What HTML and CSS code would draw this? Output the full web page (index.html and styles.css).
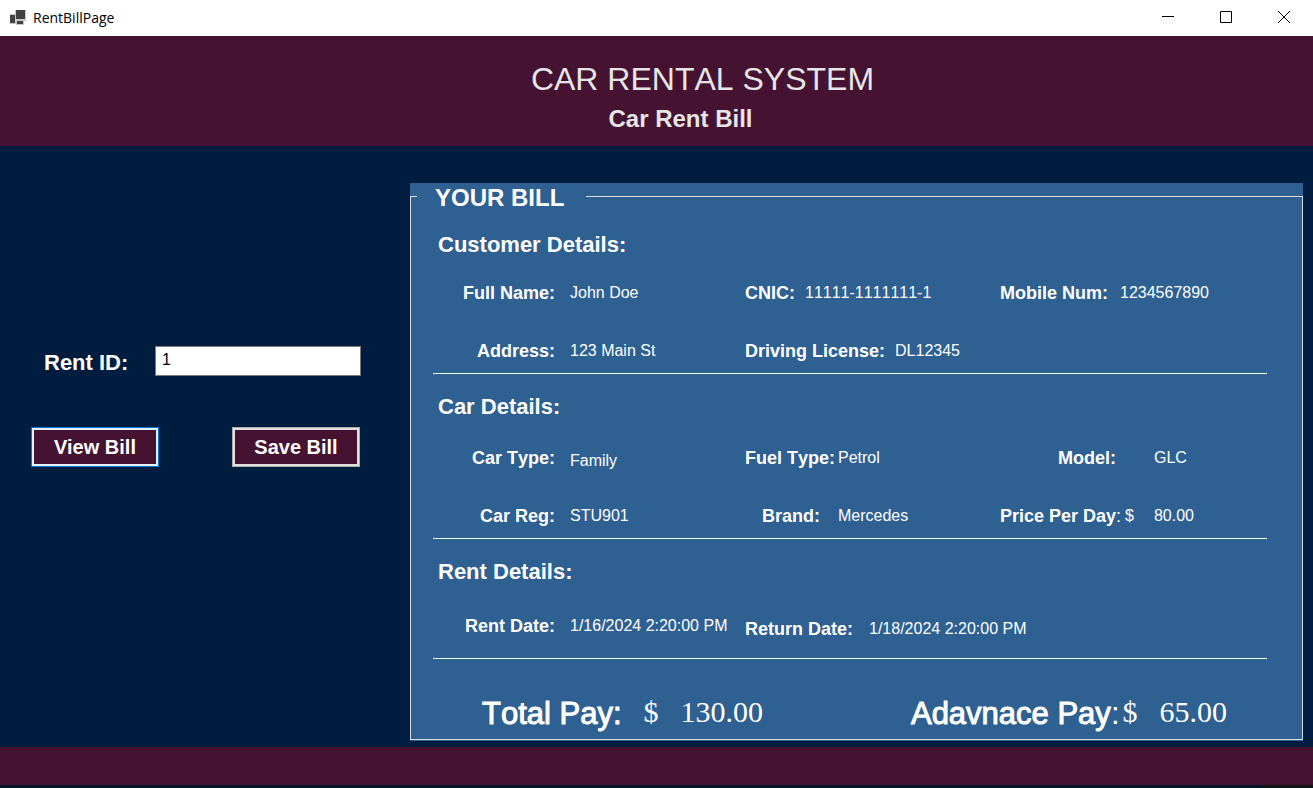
FILE: index.html
```html
<!DOCTYPE html>
<html lang="en">
<head>
<meta charset="utf-8">
<title>RentBillPage</title>
<link rel="stylesheet" href="styles.css">
</head>
<body>
<div class="titlebar">
  <svg class="app-icon" width="16" height="16" viewBox="0 0 16 16" aria-hidden="true">
    <path fill="#c8c8c8" d="M5 0h11v11H5zM0 4h6v10H0zM6 10h8v5H6z"/>
    <path fill="#424242" d="M6 0h9v9H6zM0 5h5v8H0zM7 11h6v3H7z"/>
  </svg>
  <span class="window-title">RentBillPage</span>
  <div class="window-controls">
    <button type="button" aria-label="Minimize"><svg width="12" height="12" viewBox="0 0 12 12"><path d="M0 5.5h12"/></svg></button>
    <button type="button" aria-label="Maximize"><svg width="12" height="12" viewBox="0 0 12 12"><path d="M.5.5h11v11H.5z"/></svg></button>
    <button type="button" aria-label="Close"><svg width="12" height="12" viewBox="0 0 12 12"><path d="M0 0l12 12M12 0L0 12"/></svg></button>
  </div>
</div>

<header class="banner">
  <h1>CAR RENTAL SYSTEM</h1>
  <p>Car Rent Bill</p>
</header>

<main class="content">
  <form class="lookup">
    <div class="lookup-field">
      <label for="rent-id">Rent ID:</label>
      <input id="rent-id" type="text" value="1">
    </div>
    <div class="actions">
      <button class="action focused" type="button">View Bill</button>
      <button class="action" type="button">Save Bill</button>
    </div>
  </form>

  <div class="panel">
    <fieldset class="bill">
      <legend>YOUR BILL</legend>
      <div class="bill-body">
        <section class="group customer">
          <h2>Customer Details:</h2>
          <dl class="row">
            <div class="field first"><dt>Full Name:</dt><dd>John Doe</dd></div>
            <div class="field"><dt>CNIC:</dt><dd>11111-1111111-1</dd></div>
            <div class="field mobile"><dt>Mobile Num:</dt><dd>1234567890</dd></div>
          </dl>
          <dl class="row">
            <div class="field first"><dt>Address:</dt><dd>123 Main St</dd></div>
            <div class="field"><dt>Driving License:</dt><dd>DL12345</dd></div>
          </dl>
        </section>
        <section class="group car">
          <h2>Car Details:</h2>
          <dl class="row">
            <div class="field first lowered-value"><dt>Car Type:</dt><dd>Family</dd></div>
            <div class="field second"><dt>Fuel Type:</dt><dd>Petrol</dd></div>
            <div class="field third"><dt>Model:</dt><dd>GLC</dd></div>
          </dl>
          <dl class="row">
            <div class="field first"><dt>Car Reg:</dt><dd>STU901</dd></div>
            <div class="field second brand"><dt>Brand:</dt><dd>Mercedes</dd></div>
            <div class="field price"><dt>Price Per Day<span class="light">:</span></dt><dd><span>$</span><span>80.00</span></dd></div>
          </dl>
        </section>
        <section class="group rent">
          <h2>Rent Details:</h2>
          <dl class="row">
            <div class="field first"><dt>Rent Date:</dt><dd>1/16/2024 2:20:00 PM</dd></div>
            <div class="field return"><dt>Return Date:</dt><dd>1/18/2024 2:20:00 PM</dd></div>
          </dl>
        </section>
        <dl class="totals">
          <div class="total"><dt>Total Pay:</dt><dd><span>$</span><span>130.00</span></dd></div>
          <div class="total advance"><dt>Adavnace Pay<span class="light">:</span></dt><dd><span>$</span><span>65.00</span></dd></div>
        </dl>
      </div>
    </fieldset>
  </div>
</main>

<footer class="footer"></footer>
<div class="edge"></div>
</body>
</html>
```
FILE: styles.css
```css
* { box-sizing: border-box; }

body {
  margin: 0;
  min-height: 100vh;
  display: flex;
  flex-direction: column;
  background: #001d40;
  color: #fff;
  font-family: "Liberation Sans", Arial, sans-serif;
  font-size: 16px;
  font-kerning: none;
  line-height: 20px;
}

h1, h2, p, dl, dd { margin: 0; }

.titlebar {
  display: flex;
  align-items: center;
  height: 36px;
  padding-left: 10px;
  background: #fff;
  color: #000;
}
.window-title {
  margin-left: 7px;
  font-family: "Open Sans", "Noto Sans", sans-serif;
  font-size: 14px;
}
.window-controls { display: flex; margin-left: auto; }
.window-controls button {
  display: grid;
  place-items: center;
  width: 58px;
  height: 36px;
  padding: 0 0 2px;
  border: 0;
  background: none;
}
.window-controls path { fill: none; stroke: #000; stroke-width: 1; }

.banner {
  padding: 23px 0 12px 92px;
  background: #451232;
  color: #e6e6e6;
  text-align: center;
}
.banner h1 {
  font-size: 32px;
  font-weight: 400;
  line-height: 40px;
}
.banner p {
  margin-top: 5px;
  margin-right: 44px;
  font-size: 24px;
  font-weight: 700;
  line-height: 30px;
}

.content {
  flex: 1;
  display: flex;
  align-items: flex-start;
  padding: 37px 10px 6px 0;
}

.lookup { flex: 0 0 410px; padding: 163px 49px 0 31px; }
.lookup-field { display: flex; align-items: flex-end; padding-left: 13px; }
.lookup-field label {
  width: 111px;
  font-size: 22px;
  font-weight: 700;
  line-height: 26px;
}
.lookup-field input {
  width: 206px;
  height: 30px;
  padding: 0 6px 2px;
  border: 1px solid #7a7a7a;
  background: #fff;
  color: #000;
  font: inherit;
}
.actions { display: flex; gap: 73px; margin-top: 51px; }
.action {
  width: 128px;
  height: 40px;
  padding: 0;
  border: 1px solid #adadad;
  box-shadow: inset 0 0 0 2px #e1e1e1;
  background: #451232;
  color: #fff;
  font-family: inherit;
  font-size: 20px;
  font-weight: 700;
}
.action.focused { border-color: #0078d7; box-shadow: inset 0 0 0 2px #e5f1fb; }

.panel { flex: 1; padding-bottom: 1px; background: #2e6091; }
.bill {
  margin: 0;
  padding: 0 35px 5px 6px;
  border: 1px solid #dcdcdc;
}
.bill legend {
  padding: 2px 22px 0 18px;
  font-size: 24px;
  font-weight: 700;
  line-height: 25px;
}
.bill-body { padding-left: 16px; }

.group { padding: 19px 0 12px; border-bottom: 1px solid #fff; }
.group h2 {
  margin-bottom: 27px;
  padding-left: 5px;
  font-size: 22px;
  line-height: 28px;
}
.customer { padding-top: 21px; }
.customer h2 { margin-bottom: 24px; }
.rent { padding-bottom: 22px; }
.rent h2 { margin-bottom: 30px; }

.row { display: grid; grid-template-columns: 312fr 255fr 267fr; }
.row + .row { margin-top: 38px; }
.field { display: flex; gap: 10px; white-space: nowrap; }
.field dt { font-size: 18px; font-weight: 700; }
.field .light { font-weight: 400; }
.first { gap: 15px; }
.first dt { width: 122px; text-align: right; }
.lowered-value dd { padding-top: 3px; margin-bottom: -3px; }
.mobile { gap: 12px; }
.second { gap: 2px; }
.second dt { width: 91px; }
.brand dt { padding-right: 16px; text-align: right; }
.third { gap: 38px; }
.third dt { width: 116px; text-align: right; }
.price { gap: 3px; }
.price dt { width: 122px; }
.price dd { display: flex; gap: 20px; }
.return { gap: 16px; grid-column: 2 / 4; padding-top: 3px; margin-bottom: -3px; }

.totals {
  display: flex;
  justify-content: space-between;
  padding: 35px 40px 0 49px;
  line-height: 40px;
}
.total { display: flex; gap: 22px; }
.total dt { font-size: 31px; -webkit-text-stroke: 1px; }
.total .light { -webkit-text-stroke: 0; }
.total dd {
  display: flex;
  gap: 22px;
  font-family: "Liberation Serif", "Times New Roman", serif;
  font-size: 30px;
  line-height: 36px;
}
.advance { gap: 3px; }

.footer { height: 38px; background: #451232; }
.edge { height: 3px; background: #001528; border-right: 50px solid #151515; }
```
